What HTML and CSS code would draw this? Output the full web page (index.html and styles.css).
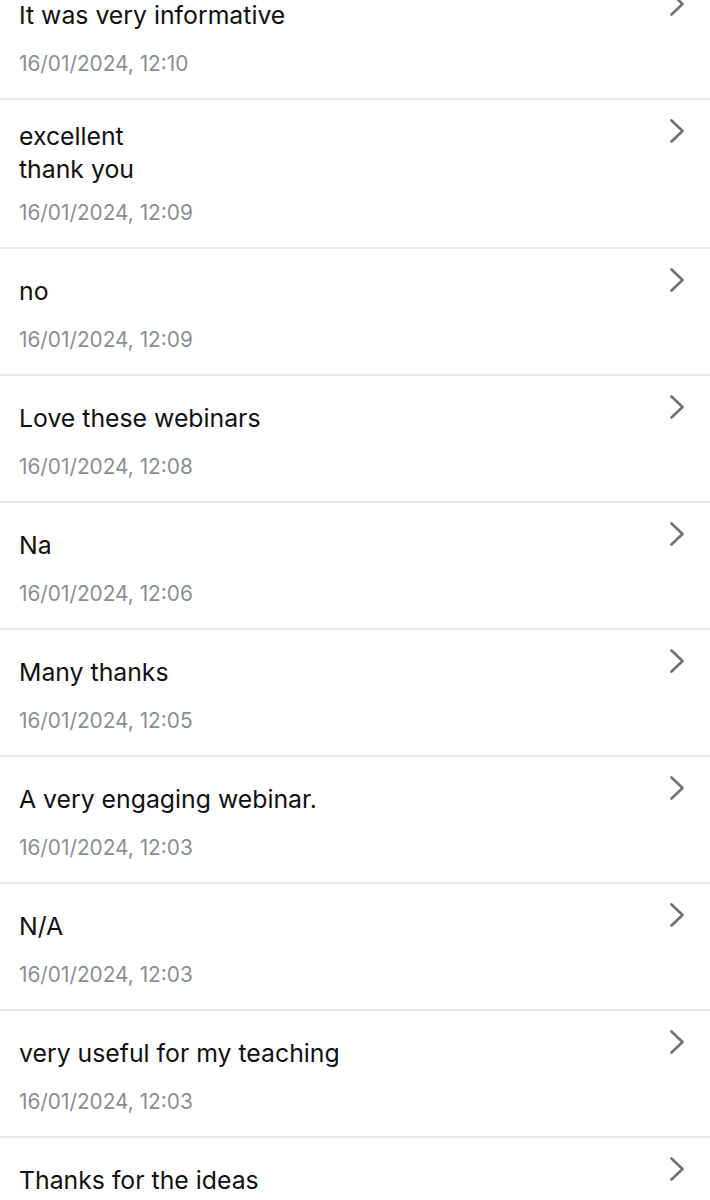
FILE: index.html
```html
<!DOCTYPE html>
<html lang="en">
<head>
<meta charset="utf-8">
<link rel="stylesheet" href="styles.css">
</head>
<body>
<ul class="list">
  <li class="row"><div class="head"><div class="text">It was very informative</div><svg class="chev" viewBox="0 0 16 24"><path d="M2.5 1.5 L13.5 12 L2.5 22.5"/></svg></div><div class="date">16/01/2024, 12:10</div></li>
  <li class="row"><div class="head"><div class="text">excellent<br>thank you</div><svg class="chev" viewBox="0 0 16 24"><path d="M2.5 1.5 L13.5 12 L2.5 22.5"/></svg></div><div class="date">16/01/2024, 12:09</div></li>
  <li class="row"><div class="head"><div class="text">no</div><svg class="chev" viewBox="0 0 16 24"><path d="M2.5 1.5 L13.5 12 L2.5 22.5"/></svg></div><div class="date">16/01/2024, 12:09</div></li>
  <li class="row"><div class="head"><div class="text">Love these webinars</div><svg class="chev" viewBox="0 0 16 24"><path d="M2.5 1.5 L13.5 12 L2.5 22.5"/></svg></div><div class="date">16/01/2024, 12:08</div></li>
  <li class="row"><div class="head"><div class="text">Na</div><svg class="chev" viewBox="0 0 16 24"><path d="M2.5 1.5 L13.5 12 L2.5 22.5"/></svg></div><div class="date">16/01/2024, 12:06</div></li>
  <li class="row"><div class="head"><div class="text">Many thanks</div><svg class="chev" viewBox="0 0 16 24"><path d="M2.5 1.5 L13.5 12 L2.5 22.5"/></svg></div><div class="date">16/01/2024, 12:05</div></li>
  <li class="row"><div class="head"><div class="text">A very engaging webinar.</div><svg class="chev" viewBox="0 0 16 24"><path d="M2.5 1.5 L13.5 12 L2.5 22.5"/></svg></div><div class="date">16/01/2024, 12:03</div></li>
  <li class="row"><div class="head"><div class="text">N/A</div><svg class="chev" viewBox="0 0 16 24"><path d="M2.5 1.5 L13.5 12 L2.5 22.5"/></svg></div><div class="date">16/01/2024, 12:03</div></li>
  <li class="row"><div class="head"><div class="text">very useful for my teaching</div><svg class="chev" viewBox="0 0 16 24"><path d="M2.5 1.5 L13.5 12 L2.5 22.5"/></svg></div><div class="date">16/01/2024, 12:03</div></li>
  <li class="row"><div class="head"><div class="text">Thanks for the ideas</div><svg class="chev" viewBox="0 0 16 24"><path d="M2.5 1.5 L13.5 12 L2.5 22.5"/></svg></div><div class="date">16/01/2024, 12:03</div></li>
</ul>
</body>
</html>
```
FILE: styles.css
```css
html, body {
  margin: 0;
  padding: 0;
  background: #ffffff;
}
body {
  font-family: Inter, "Liberation Sans", sans-serif;
  overflow: hidden;
}
.list {
  list-style: none;
  margin: -27px 0 0 0;
  padding: 0;
}
.row {
  padding: 20px 25px 20px 19px;
  border-bottom: 2px solid #ebebeb;
}
.head {
  display: flex;
  align-items: flex-start;
  justify-content: space-between;
}
.text {
  min-height: 44px;
  display: flex;
  align-items: center;
  font-size: 24.8px;
  line-height: 33px;
  color: #111111;
}
.chev {
  width: 16px;
  height: 24px;
  flex: none;
  margin-top: -1px;
}
.chev path {
  fill: none;
  stroke: #6c7278;
  stroke-width: 2.6;
  stroke-linecap: round;
  stroke-linejoin: round;
}
.date {
  margin-top: 13px;
  font-size: 20.8px;
  line-height: 28px;
  color: #8a8f94;
}
```
